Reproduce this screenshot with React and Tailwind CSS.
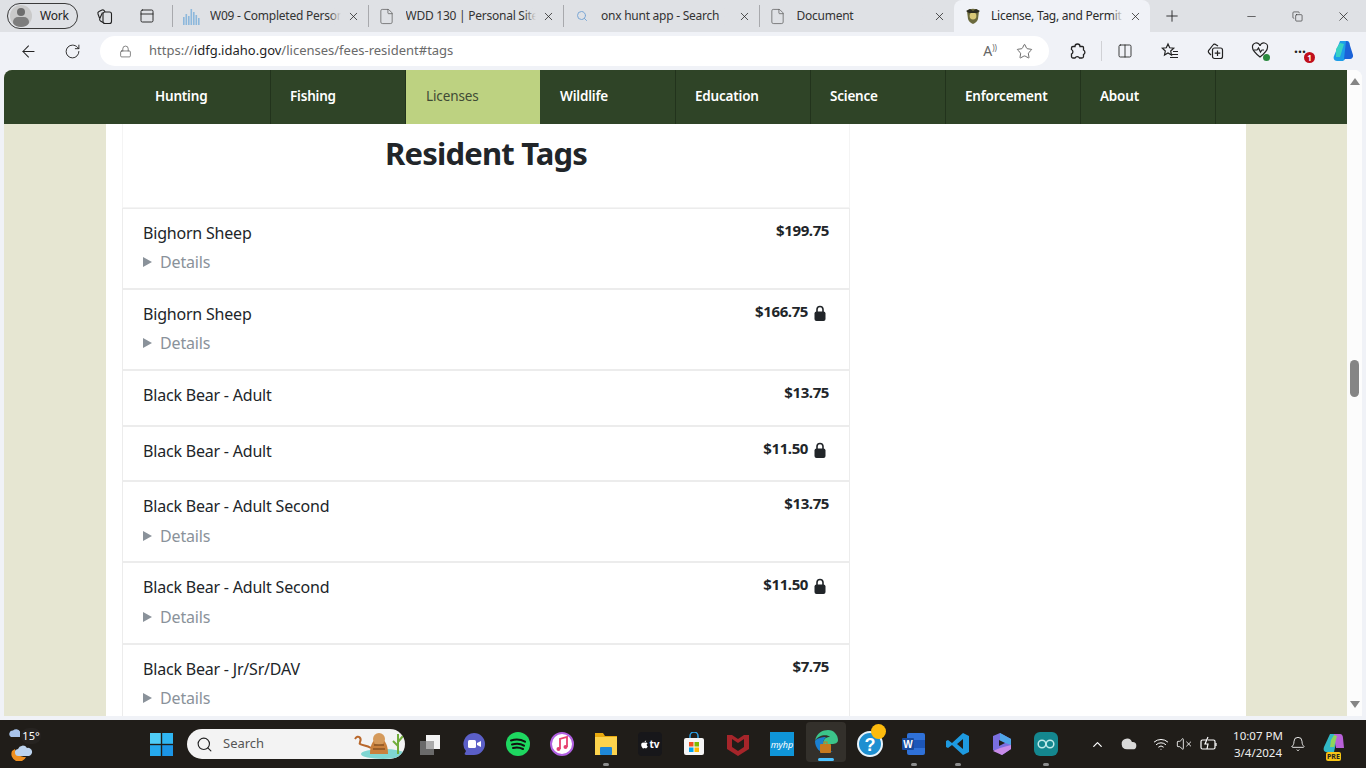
import React from "react";
import { ArrowLeft, RotateCw, Lock, Star, Columns2, Plus, Minus, X, Search, ChevronUp, Bell, Wifi, VolumeX, Cloud, File, Copy, PanelTop } from "lucide-react";
import { FaApple } from "react-icons/fa";

const chrome = { fontFamily: '"Noto Sans", "Open Sans", sans-serif' };

const Padlock = () => (
  <svg width="12" height="17" viewBox="0 0 12 17" className="ml-[6px] mt-[1px]">
    <path d="M3 7V4.500a3 3 0 0 1 6 0V7" fill="none" stroke="#212529" strokeWidth="1.600" />
    <rect x="0.500" y="6.500" width="11" height="9.500" rx="2" fill="#212529" />
  </svg>
);

const Tab = ({ icon, title, active }) => (
  <div className={active ? "w-[196px] h-[32px] shrink-0 bg-[#f0f2f7] rounded-t-[8px] flex items-center pl-[10px] pr-[8px]" : "w-[194.5px] h-[32px] shrink-0 flex items-center pl-[9px] pr-[8px]"}>
    <div className="w-[18px] h-[18px] flex items-center justify-center shrink-0">{icon}</div>
    <div className={active ? "ml-[9px] flex-1 relative overflow-hidden whitespace-nowrap text-[12px] tracking-[-0.25px] text-[#2b2b2b]" : "ml-[10px] flex-1 relative overflow-hidden whitespace-nowrap text-[12px] tracking-[-0.25px] text-[#333]"}>
      {title}
      <span className={active ? "absolute right-0 top-0 bottom-0 w-[12px] bg-linear-to-r from-transparent to-[#f0f2f7]" : "absolute right-0 top-0 bottom-0 w-[12px] bg-linear-to-r from-transparent to-[#dfe1e5]"} />
    </div>
    <X size={13} strokeWidth={1.400} className="text-[#222] shrink-0 ml-[6px]" />
  </div>
);

const TabSep = () => <div className="w-px h-[22px] bg-[#a8a9ad] shrink-0" />;

const DocIcon = () => <File size={17} strokeWidth={1} className="text-[#555]" />;

const BarsIcon = () => (
  <svg width="18" height="18" viewBox="0 0 18 18">
    {[[1, 10], [3.500, 7], [6, 9], [8.500, 2], [11, 5], [13.500, 8], [16, 11]].map(([x, y]) => (
      <rect key={x} x={x} y={y} width="1.600" height={18 - y} fill="#8db8dc" />
    ))}
  </svg>
);

const Crest = () => (
  <svg width="16" height="18" viewBox="0 0 16 18">
    <path d="M2 4c2-3 10-3 12 0l-1 8c-1 3-3 4-5 5-2-1-4-2-5-5z" fill="#6b6a3d" />
    <circle cx="8" cy="9" r="3.400" fill="#d8c878" />
    <path d="M1 4l4-2 3 2 3-2 4 2-3 2H4z" fill="#2c2c20" />
  </svg>
);

const Row = ({ name, price, locked, details, h, gap }) => (
  <div className={h + " border-b-2 border-[#ececec] px-[20px] flex justify-between"}>
    <div className="pt-[11px]">
      <div className="text-[16px] leading-[26px] tracking-[-0.2px] text-[#212529] whitespace-nowrap">{name}</div>
      {details && (
        <div className={gap + " flex items-center text-[16px] leading-[26px] tracking-[-0.15px] text-[#8a929a]"}>
          <span className="w-0 h-0 border-y-[5px] border-y-transparent border-l-[9px] border-l-[#8a929a] mr-[8px]" />
          Details
        </div>
      )}
    </div>
    <div className="pt-[9px] flex items-start">
      <span className="text-[15px] leading-[24px] font-bold tracking-[-0.4px] text-[#212529]">{price}</span>
      {locked && <span className="mt-[5px] mr-[3px] flex"><Padlock /></span>}
    </div>
  </div>
);

const rows = [
  { name: "Bighorn Sheep", price: "$199.75", details: true, h: "h-[81px]", gap: "mt-[3px]" },
  { name: "Bighorn Sheep", price: "$166.75", locked: true, details: true, h: "h-[81px]", gap: "mt-[3px]" },
  { name: "Black Bear - Adult", price: "$13.75", h: "h-[56px]" },
  { name: "Black Bear - Adult", price: "$11.50", locked: true, h: "h-[55px]" },
  { name: "Black Bear - Adult Second", price: "$13.75", details: true, h: "h-[81px]", gap: "mt-[4px]" },
  { name: "Black Bear - Adult Second", price: "$11.50", locked: true, details: true, h: "h-[82px]", gap: "mt-[4px]" },
  { name: "Black Bear - Jr/Sr/DAV", price: "$7.75", details: true, h: "h-[81px]", gap: "mt-[3px]" },
];

const nav = ["Hunting", "Fishing", "Licenses", "Wildlife", "Education", "Science", "Enforcement", "About"];

const TB = ({ children, active, dot }) => (
  <div className={active ? "w-[40px] h-[40px] mx-[2px] rounded-[4px] bg-[#33302b] flex items-center justify-center relative" : "w-[44px] h-[44px] flex items-center justify-center relative"}>
    {children}
    {dot && <span className="absolute bottom-[0px] left-[19px] w-[6px] h-[3px] rounded-full bg-[#8d8d8d]" />}
    {active && <span className="absolute bottom-[1px] left-[12px] w-[16px] h-[3px] rounded-full bg-[#4cc2ff]" />}
  </div>
);

const Windows = () => (
  <svg width="23" height="23" viewBox="0 0 20 20">
    <rect width="9.400" height="9.400" fill="#4fcdf7" /><rect x="10.600" width="9.400" height="9.400" fill="#2fb6f2" />
    <rect y="10.600" width="9.400" height="9.400" fill="#25aaee" /><rect x="10.600" y="10.600" width="9.400" height="9.400" fill="#1b95e6" />
  </svg>
);

export default function App() {
  return (
    <div className="w-[1366px] h-[768px] overflow-hidden flex flex-col bg-[#f0f2f7]" style={chrome}>
      {/* tab strip */}
      <div className="h-[32px] bg-[#dfe1e5] flex items-center shrink-0">
        <div className="ml-[7px] w-[71px] h-[26px] rounded-full border border-[#3a3a3a] flex items-center pl-[2px] shrink-0">
          <div className="w-[22px] h-[22px] rounded-full bg-[#c9c9c9] flex flex-col items-center overflow-hidden">
            <span className="w-[8px] h-[8px] rounded-full bg-[#6d6d6d] mt-[3px]" />
            <span className="w-[16px] h-[10px] rounded-full bg-[#7d7d7d] mt-[1px]" />
          </div>
          <span className="ml-[8px] text-[12px] tracking-[-0.2px] text-[#222]">Work</span>
        </div>
        <div className="w-[52px] flex justify-center shrink-0">
          <svg width="17" height="17" viewBox="0 0 17 17" fill="none" stroke="#222" strokeWidth="1.100">
            <rect x="7" y="4" width="8.500" height="11.500" rx="2" />
            <path d="M7 14.500 4.500 13a2 2 0 0 1-.7-2.500L6.500 4.500M9 4 8.500 3A2 2 0 0 0 6 2L3 3.500A2 2 0 0 0 2 6l1.500 4" />
          </svg>
        </div>
        <div className="w-[34px] flex justify-center shrink-0"><PanelTop size={16} strokeWidth={1.400} className="text-[#222]" /></div>
        <div className="w-[9px]" />
        <TabSep />
        <Tab icon={<BarsIcon />} title="W09 - Completed Person" />
        <TabSep />
        <Tab icon={<DocIcon />} title="WDD 130 | Personal Site" />
        <TabSep />
        <Tab icon={<Search size={12} strokeWidth={2} className="text-[#7aa7d6]" />} title="onx hunt app - Search" />
        <TabSep />
        <Tab icon={<DocIcon />} title="Document" />
        <Tab active icon={<Crest />} title="License, Tag, and Permit" />
        <div className="w-[44px] flex justify-center shrink-0"><Plus size={18} strokeWidth={1.200} className="text-[#222]" /></div>
        <div className="w-[34px] shrink-0" />
        <div className="w-[46px] flex justify-center shrink-0"><Minus size={13} strokeWidth={1.200} className="text-[#222]" /></div>
        <div className="w-[46px] flex justify-center shrink-0"><Copy size={11} strokeWidth={1.300} className="text-[#222]" /></div>
        <div className="w-[46px] flex justify-center shrink-0"><X size={15} strokeWidth={1.200} className="text-[#222]" /></div>
      </div>

      {/* toolbar */}
      <div className="h-[38px] flex items-center shrink-0">
        <div className="w-[56px] flex justify-center"><ArrowLeft size={19} strokeWidth={1.300} className="text-[#222]" /></div>
        <div className="w-[32px] flex justify-center"><RotateCw size={17} strokeWidth={1.300} className="text-[#222]" /></div>
        <div className="ml-[12px] w-[949px] h-[30px] bg-white rounded-full flex items-center shrink-0">
          <Lock size={13} strokeWidth={1.200} className="ml-[19px] text-[#444]" />
          <span className="ml-[17px] text-[13px] text-[#6a6a6a]"><span>https://</span><span className="text-[#1f1f1f]">idfg.idaho.gov</span>/licenses/fees-resident#tags</span>
          <span className="ml-auto text-[14px] text-[#666] leading-none">A</span>
          <span className="text-[8px] text-[#666] leading-none mr-[19px] mb-[6px]">))</span>
          <Star size={17} strokeWidth={1.100} className="text-[#444] mr-[16px]" />
        </div>
        <div className="ml-[19px] w-[18px] flex justify-center">
          <svg width="17" height="17" viewBox="0 0 17 17" fill="none" stroke="#222" strokeWidth="1.300">
            <path d="M6 3.500a2.500 2.500 0 0 1 5 0h2.500a1 1 0 0 1 1 1V7a2.500 2.500 0 0 1 0 4.500v2a1.500 1.500 0 0 1-1.500 1.500h-2.500a2.500 2.500 0 0 0-4.500 0H4a1.500 1.500 0 0 1-1.500-1.500V11a2.500 2.500 0 0 0 0-4.500V5A1.500 1.500 0 0 1 4 3.500z" />
          </svg>
        </div>
        <div className="ml-[15px] w-px h-[20px] bg-[#d0d1d5]" />
        <div className="ml-[14px] w-[18px] flex justify-center"><Columns2 size={16} strokeWidth={1.300} className="text-[#222]" /></div>
        <div className="ml-[27px] w-[18px] flex justify-center">
          <svg width="18" height="18" viewBox="0 0 18 18" fill="none" stroke="#222" strokeWidth="1.200">
            <path d="M7 2l1.700 3.800 4 .4-3 2.800.8 4L7 11l-3.500 2 .8-4-3-2.800 4-.4z" />
            <path d="M12 9.500h5M11 12.500h6M9 15.500h8" />
          </svg>
        </div>
        <div className="ml-[27px] w-[18px] flex justify-center">
          <svg width="18" height="18" viewBox="0 0 18 18" fill="none" stroke="#222" strokeWidth="1.200">
            <path d="M5 13 3 11a2 2 0 0 1 0-3l4-5a2 2 0 0 1 3-.3L12 4" />
            <rect x="6.500" y="6" width="10" height="10.500" rx="2" />
            <path d="M11.500 8.500v5.500M8.700 11.200h5.600" />
          </svg>
        </div>
        <div className="ml-[27px] w-[18px] flex justify-center relative">
          <svg width="18" height="18" viewBox="0 0 18 18" fill="none" stroke="#222" strokeWidth="1.200"><path d="M9 15C4 11 1.500 8.500 1.500 5.500A3.500 3.500 0 0 1 9 4a3.500 3.500 0 0 1 7.500 1.500C16.500 8.500 14 11 9 15z" /><path d="M3 8h3l1.500-2 2 4 1.500-2h2" /></svg>
          <span className="absolute right-[-1px] bottom-[-1px] w-[7px] h-[7px] rounded-full bg-[#2a8a3e]" />
        </div>
        <div className="ml-[22px] w-[18px] flex justify-center relative items-center h-[18px]">
          <span className="text-[14px] font-bold leading-none text-[#222] mb-[7px]">...</span>
          <span className="absolute right-[-6px] bottom-[-3px] w-[11px] h-[11px] rounded-full bg-[#c00f1c] text-white text-[8px] leading-[11px] text-center font-bold">1</span>
        </div>
        <div className="ml-[22px] shrink-0">
          <svg width="24" height="24" viewBox="0 0 24 24">
            <path d="M9 2h7c2 0 3 2 2.500 3.500L14 20c-.5 1.500-2 2-3 2H6c-3 0-4-3-3-5z" fill="#1d9de8" />
            <path d="M15 2c2 0 3 1 3.500 3L22 16c.5 2-1 4-3 4h-6z" fill="#1b63d8" />
            <path d="M5 10l4-6 4 1-4 13H5z" fill="#37d1c4" />
          </svg>
        </div>
      </div>

      {/* page */}
      <div className="h-[646px] mx-[4px] flex shrink-0 rounded-t-[8px] overflow-hidden bg-white">
        <div className="flex-1 flex flex-col min-w-0 bg-[#e6e6d2]">
          <div className="h-[54px] bg-[#2f4427] flex pl-[132px] shrink-0">
            {nav.map((n, i) => (
              <div key={n} className={i === 2 ? "w-[134px] bg-[#bdd281] pl-[20px] pb-[2px] mr-[1px] flex items-center text-[13.5px] tracking-[-0.1px] text-[#3f4a35]" : "w-[135px] border-r border-[#22331c] pl-[19px] pb-[2px] flex items-center text-[13.5px] tracking-[-0.2px] font-semibold text-white"}>{n}</div>
            ))}
          </div>
          <div className="flex-1 mx-[102px] w-[1140px] bg-white pl-[16px] overflow-hidden">
            <div className="w-[728px] border-x border-[#f4f4f4] h-[84px] border-b flex justify-center">
              <h1 className="text-[31px] leading-[58px] font-bold tracking-[-0.8px] text-[#212529]">Resident Tags</h1>
            </div>
            <div className="w-[728px] border-x border-[#ececec] border-t">
              {rows.map((r, i) => <Row key={i} {...r} />)}
            </div>
          </div>
        </div>
        <div className="w-[15px] bg-[#fcfcfc] flex flex-col items-center shrink-0">
          <span className="mt-[8px] w-0 h-0 border-x-[5px] border-x-transparent border-b-[7px] border-b-[#858585]" />
          <span className="mt-[275px] w-[9px] h-[37px] rounded-full bg-[#858585]" />
          <span className="mt-auto mb-[8px] w-0 h-0 border-x-[5px] border-x-transparent border-t-[7px] border-t-[#858585]" />
        </div>
      </div>

      <div className="h-[4px] shrink-0" />

      {/* taskbar */}
      <div className="h-[48px] bg-[#201d19] flex items-center shrink-0 text-white">
        <div className="w-[139px] pl-[8px] flex items-center relative h-full shrink-0">
          <svg width="28" height="34" viewBox="0 0 28 34">
            <path d="M3 10a3.500 3.500 0 0 1 2-6.500 4.500 4.500 0 0 1 7 1V10z" fill="#a8c4ec" />
            <path d="M4 24a7 7 0 0 0 14 6c-6 0-10-2-11-8z" fill="#f09020" />
            <path d="M11 29a3.500 3.500 0 0 1-1-7 5 5 0 0 1 9-1 4 4 0 0 1 2 8z" fill="#bcd3ee" />
          </svg>
          <span className="absolute left-[21px] top-[8px] w-[20px] h-[16px] rounded-full bg-[#262320] text-center text-[11px] leading-[16px]">15°</span>
        </div>
        <div className="w-[44px] flex justify-center shrink-0"><Windows /></div>
        <div className="ml-[4px] w-[218px] h-[30px] rounded-full bg-[#f3f3f3] flex items-center shrink-0 overflow-hidden">
          <Search size={17} strokeWidth={1.600} className="ml-[9px] text-[#222]" />
          <span className="ml-[10px] text-[13px] text-[#555]">Search</span>
          <svg width="52" height="30" viewBox="0 0 52 30" className="ml-auto">
            <ellipse cx="30" cy="25" rx="22" ry="5" fill="#7fd6d2" />
            <path d="M2 10c3-5 7-1 5 3s6 2 11 6" fill="none" stroke="#b9682c" strokeWidth="2" />
            <path d="M17 25c0-8 2-14 9-17 7 3 9 9 9 17z" fill="#c9803c" />
            <circle cx="26" cy="10" r="6" fill="#d59a5b" />
            <path d="M21 16h10M20 20h12" stroke="#6b3d14" strokeWidth="1.200" />
            <path d="M45 25V5M45 13l5-6M45 17l-5-5" stroke="#71ad3b" strokeWidth="2" fill="none" />
          </svg>
        </div>
        <div className="ml-[3px] flex">
          <TB><svg width="24" height="24" viewBox="0 0 24 24"><rect x="2" y="9" width="14" height="14" fill="#6a6a6a" /><rect x="8" y="3" width="14" height="14" fill="#f2f2f2" /><rect x="8" y="9" width="8" height="8" fill="#aaa" /></svg></TB>
          <TB><svg width="24" height="24" viewBox="0 0 24 24"><path d="M12 1a11 11 0 0 1 0 22H4c-1 0-2-1-1-2l1-2A11 11 0 0 1 12 1z" fill="#5b5fc7" /><rect x="6" y="8" width="8" height="8" rx="1.500" fill="#fff" /><path d="M15 11l4-2v6l-4-2z" fill="#fff" /></svg></TB>
          <TB><svg width="24" height="24" viewBox="0 0 24 24"><circle cx="12" cy="12" r="12" fill="#1ed760" /><path d="M5 8.500c5-1.500 10-1 14 1.200M6 12.500c4-1 9-.7 12 1.200M7 16c3-.8 7-.5 10 1" stroke="#111" strokeWidth="2" fill="none" strokeLinecap="round" /></svg></TB>
          <TB><svg width="24" height="24" viewBox="0 0 24 24"><circle cx="12" cy="12" r="11" fill="#fff" stroke="#b05fe0" strokeWidth="2" /><path d="M10 17V7l7-2v10" stroke="#e6406e" strokeWidth="1.800" fill="none" /><circle cx="8.500" cy="17" r="2" fill="#e6406e" /><circle cx="15.500" cy="15" r="2" fill="#e6406e" /></svg></TB>
          <TB dot><svg width="24" height="24" viewBox="0 0 24 24"><path d="M1 1h8l2 3h12v19H1z" fill="#e8a90e" /><rect x="1" y="5" width="22" height="18" fill="#fcd34d" /><rect x="6" y="15" width="12" height="8" rx="1" fill="#1e88d8" /></svg></TB>
          <TB><div className="w-[24px] h-[24px] rounded-[4px] bg-[#17171a] flex items-center justify-center text-[10px] font-bold text-white leading-none"><FaApple size={9} />tv</div></TB>
          <TB><svg width="24" height="24" viewBox="0 0 24 24"><path d="M8 6V4a4 4 0 0 1 8 0v2" stroke="#2aa0e8" strokeWidth="1.500" fill="none" /><rect x="2" y="6" width="20" height="17" rx="2" fill="#f5f5f5" /><rect x="7" y="10" width="4.500" height="4.500" fill="#f25022" /><rect x="12.500" y="10" width="4.500" height="4.500" fill="#7fba00" /><rect x="7" y="15.500" width="4.500" height="4.500" fill="#00a4ef" /><rect x="12.500" y="15.500" width="4.500" height="4.500" fill="#ffb900" /></svg></TB>
          <TB><svg width="22" height="24" viewBox="0 0 22 24"><path d="M0 3l5 0 6 4 6-4 5 0v14l-11 7L0 17z" fill="#a6252a" /><path d="M5 7l6 4 6-4v8l-6 4-6-4z" fill="#201d19" /></svg></TB>
          <TB><div className="w-[24px] h-[24px] bg-[#0f95d8] flex items-center justify-center text-[9px] italic text-white leading-none">myhp</div></TB>
          <TB active><svg width="26" height="26" viewBox="0 0 26 26"><path d="M2 12C3 4 10 1 15 1c6 0 10 5 10 10 0 3-3 4-6 4H10c0-6 4-7 7-7-3-3-12-2-15 4z" fill="#3bc48a" /><path d="M2 12c0 7 5 12 11 12 3 0 5-1 7-2-6 1-11-2-10-8 0-3 2-5 3-6-4 0-9 1-11 4z" fill="#1a7fd0" /><rect x="7" y="15" width="11" height="9" rx="1" fill="#c87a1e" /><rect x="11" y="13" width="3" height="3" fill="none" stroke="#c87a1e" /></svg></TB>
          <TB><div className="relative"><svg width="26" height="26" viewBox="0 0 26 26"><circle cx="13" cy="13" r="12" fill="#1d8fd1" stroke="#e8f4fc" strokeWidth="2" /><text x="13" y="20" textAnchor="middle" fontSize="18" fontWeight="700" fill="#fff" fontFamily="Liberation Sans">?</text></svg><span className="absolute right-[-3px] top-[-7px] w-[15px] h-[15px] rounded-full bg-[#fdbb0d]" /></div></TB>
          <TB dot><svg width="26" height="24" viewBox="0 0 26 24"><rect x="6" y="1" width="18" height="22" rx="2" fill="#2f71d8" /><rect x="6" y="8" width="18" height="8" fill="#1c56b8" /><rect x="1" y="6" width="12" height="12" rx="1" fill="#184a9c" /><text x="7" y="15.500" textAnchor="middle" fontSize="10" fontWeight="700" fill="#fff" fontFamily="Liberation Sans">W</text></svg></TB>
          <TB dot><svg width="24" height="24" viewBox="0 0 24 24"><path d="M17 1l6 3v16l-6 3L6 13l-4 3-2-1V9l2-1 4 3zM17 7l-6 5 6 5z" fill="#1e9ae0" /></svg></TB>
          <TB><svg width="22" height="24" viewBox="0 0 22 24"><path d="M2 4l7-3 11 6v10l-9 6-9-5z" fill="#7a6fe0" /><path d="M9 1l11 6v6L9 9z" fill="#4fa6e8" /><path d="M2 19l9 4 9-6v-4l-11 3z" fill="#c88be8" /><path d="M8 8l6 3-6 3z" fill="#201d19" /></svg></TB>
          <TB dot><div className="w-[24px] h-[24px] rounded-[6px] bg-[#14878f] flex items-center justify-center"><svg width="18" height="10" viewBox="0 0 18 10" fill="none" stroke="#bfeaea" strokeWidth="1.500"><circle cx="5" cy="5" r="3.800" /><circle cx="13" cy="5" r="3.800" /></svg></div></TB>
        </div>
        <div className="ml-[19px] w-[20px] flex justify-center shrink-0"><ChevronUp size={15} strokeWidth={2} /></div>
        <div className="ml-[12px] w-[20px] flex justify-center shrink-0"><Cloud size={16} fill="#d9d9d9" stroke="#d9d9d9" /></div>
        <div className="ml-[12px] w-[20px] flex justify-center shrink-0"><Wifi size={16} strokeWidth={1.500} /></div>
        <div className="ml-[3px] w-[20px] flex justify-center shrink-0"><VolumeX size={16} strokeWidth={1.300} /></div>
        <div className="ml-[5px] w-[20px] flex justify-center shrink-0">
          <svg width="18" height="18" viewBox="0 0 18 18" fill="none" stroke="#fff" strokeWidth="1.200"><rect x="1" y="5" width="14" height="9" rx="1.500" /><path d="M16 8v3" /><path d="M8 2L5 9h3l-1 5" fill="#201d19" /></svg>
        </div>
        <div className="ml-[10px] w-[58px] text-center text-[11.500px] leading-[17px] shrink-0 text-[#eee] whitespace-nowrap">
          <div>10:07 PM</div>
          <div>3/4/2024</div>
        </div>
        <div className="ml-[2px] w-[18px] flex justify-center shrink-0"><Bell size={16} strokeWidth={1.300} /></div>
        <div className="ml-[12px] w-[30px] flex justify-center relative shrink-0">
          <svg width="24" height="24" viewBox="0 0 24 24"><path d="M8 2h8l-4 18H5c-3 0-4-2-3-5z" fill="#31b8c6" /><path d="M12 2h6c2 0 3 2 3 4l1 10h-8z" fill="#b860d8" /><path d="M9 8l3-5 3 1-3 11H8z" fill="#8fd45c" /></svg>
          <span className="absolute left-[7px] bottom-[-5px] h-[9px] px-[1px] rounded-[2px] bg-[#f8c513] text-[#222] text-[7px] font-bold leading-[9px]">PRE</span>
        </div>
      </div>
    </div>
  );
}
